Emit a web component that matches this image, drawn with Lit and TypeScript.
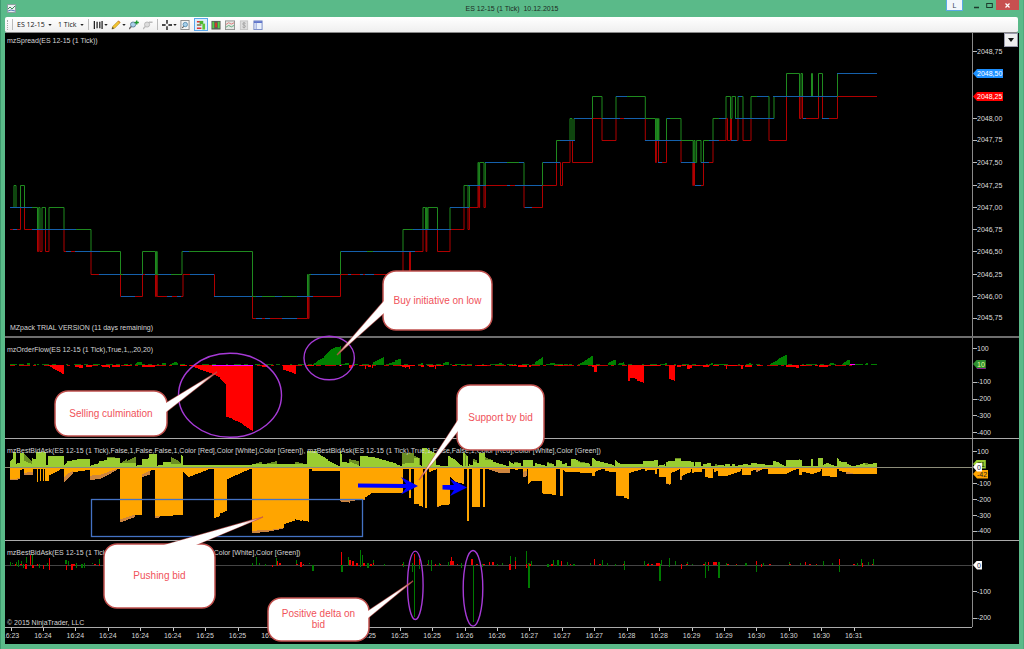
import { LitElement, html, svg, css } from "lit";
import { customElement } from "lit/decorators.js";
import { styleMap } from "lit/directives/style-map.js";

type Step = [number, number];
type Seg = [number, number, number, number];
type Block = { at: number; segs: Seg[] };
type Spike = [number, number, number, number];

// ---------- price panel: tick levels, counted down from 2048.75 ----------
const levelY = (k: number) => Math.floor(51.5 + 22.25 * k) + 0.5;

const ASK: Step[] = [
  [10, 7], [14, 6], [16, 7], [20.5, 6], [24.5, 7], [37.5, 8], [38.7, 7], [40, 8], [42, 7], [45.5, 8], [49, 7],
  [64, 8], [91, 9], [120.5, 10], [142.5, 9], [155.5, 10], [156.4, 9], [157.2, 10], [182, 9], [252.5, 11],
  [307.5, 10], [308.2, 11], [309, 10], [340.5, 9], [403, 8], [423, 7], [425.6, 8], [426.4, 7], [427.2, 8],
  [428, 7], [437.5, 8], [450, 7], [464, 6], [468, 7], [469.4, 6], [478, 5], [478.8, 6], [479.6, 5], [484, 6],
  [485.3, 5], [524, 6], [542.5, 5], [556.5, 4], [570, 3], [572, 4], [574, 3], [592.5, 2], [602, 3], [616, 2],
  [645.3, 3], [655.5, 4], [656.4, 3], [657.5, 4], [658.6, 3], [658.9, 4], [666.5, 3], [681, 4], [693.2, 5],
  [694, 4], [695, 5], [696.6, 4], [701, 5], [703.5, 4], [713, 3], [726, 2], [730.5, 3], [732, 2], [735.5, 3],
  [738, 2], [743, 3], [751, 2], [769, 3], [774, 2], [786.5, 1], [799.5, 2], [801, 1], [802.5, 2], [811.5, 1],
  [812.5, 2], [818.5, 1], [822.5, 2], [837.5, 1], [877, 1],
];
const BID: Step[] = [
  [10, 8], [20.5, 7], [24.5, 8], [37.5, 9], [38.7, 8], [40, 9], [42, 8], [45.5, 9], [49, 8], [64, 9], [91, 10],
  [120.5, 11], [142.5, 10], [155.5, 11], [156.4, 10], [157.2, 11], [183, 10], [214.5, 11], [252.5, 12],
  [307.5, 11], [308.2, 12], [309, 11], [340.5, 10], [403, 9], [409.5, 10], [410.5, 9], [423, 8], [426, 9],
  [426.8, 8], [437.5, 9], [450, 8], [464, 7], [468, 8], [469.4, 7], [478, 6], [478.8, 7], [479.6, 6], [484, 7],
  [485.3, 6], [524, 7], [542.5, 6], [556.5, 5], [560.5, 6], [562.5, 5], [570, 4], [572.5, 5], [592.5, 3],
  [602, 4], [616, 3], [645.3, 4], [655.5, 5], [656.4, 4], [658.5, 5], [666.5, 4], [681, 5], [692.8, 6],
  [693.5, 5], [694.5, 6], [703.5, 5], [713, 4], [726, 3], [727.5, 4], [730.5, 3], [731.5, 4], [738, 3],
  [743, 4], [751, 3], [769, 4], [786.5, 2], [799.5, 3], [801, 2], [802.5, 3], [818.5, 2], [822.5, 3],
  [837.5, 2], [877, 2],
];
const LAST: [number, number, number][] = [
  [10, 32, 7], [13, 17, 8], [32, 76, 8], [66, 71, 9], [75, 100, 9], [99, 120, 10], [123, 143, 10], [121, 135, 11],
  [145, 155, 10], [159, 171, 10], [167, 172, 11], [177, 181, 11], [183, 189, 9], [190, 214, 10], [214, 252, 11],
  [256, 262, 12], [265, 270, 12], [282, 297, 12], [256, 262, 11], [275, 282, 11], [297, 313, 11], [311, 340, 10],
  [348, 351, 10], [360, 363, 10], [365, 374, 10], [341, 367, 9], [373, 415, 9], [413, 451, 8], [450, 469, 7],
  [468, 486, 6], [507, 510, 6], [515, 542, 6], [485, 507, 5], [519, 524, 5], [525, 532, 7], [543, 560, 5],
  [560, 575, 4], [574, 592, 3], [602, 620, 3], [616, 627, 2], [624, 645, 3], [645, 681, 4], [658, 662, 5],
  [667, 670, 3], [681, 695, 5], [701, 709, 5], [695, 701, 6], [709, 719, 4], [719, 726, 3], [731, 737, 4],
  [735, 752, 3], [752, 774, 3], [738, 742, 2], [757, 768, 2], [773, 837, 2], [803, 806, 3], [822, 829, 3],
  [837, 877, 1],
];

const stepPath = (s: Step[]) =>
  s.map(([x, k], i) => (i === 0 ? `M${x} ${levelY(k)}` : `H${x}V${levelY(k)}`)).join("");

// ---------- histogram panels: three units to a pixel ----------
const areaPath = (blocks: Block[], base: number) =>
  blocks
    .flatMap((b) => b.segs.map(([x1, y1, x2, y2]) => `M${b.at + x1} ${base}V${y1}L${b.at + x2} ${y2}V${base}Z`))
    .join("");

const FLOW_SELL: Block[] = [
  { at: 0, segs: [
    [145, 92, 192, 118], [225, 95, 250, 101], [258, 97, 275, 96], [303, 94, 330, 98], [335, 96, 360, 96],
    [378, 94, 390, 94], [425, 95, 465, 95], [540, 93, 560, 94], [570, 93, 600, 103], [600, 103, 640, 117],
    [640, 117, 660, 128], [660, 130, 678, 148], [678, 245, 700, 252], [700, 254, 728, 266], [728, 268, 759, 289],
    [785, 95, 802, 95], [849, 104, 888, 117] ] },
  { at: 900, segs: [
    [20, 94, 42, 93], [148, 98, 156, 98], [180, 94, 190, 94], [195, 101, 199, 101], [204, 95, 212, 95],
    [215, 99, 219, 99], [300, 93, 318, 98], [318, 97, 326, 97], [326, 102, 330, 102], [330, 94, 345, 94],
    [362, 95, 372, 95], [383, 94, 402, 96], [404, 101, 408, 101], [412, 94, 425, 94], [460, 93, 466, 93],
    [530, 94, 560, 94], [635, 94, 650, 94], [655, 95, 680, 95], [688, 97, 693, 97], [775, 94, 790, 94],
    [877, 96, 881, 96], [881, 112, 891, 112], [891, 94, 897, 94] ] },
  { at: 1800, segs: [
    [84, 137, 89, 137], [89, 127, 110, 132], [110, 136, 131, 143], [131, 94, 180, 94], [207, 131, 226, 138],
    [230, 95, 242, 97], [246, 94, 258, 94], [262, 101, 276, 100], [285, 94, 300, 94], [308, 96, 328, 95],
    [340, 94, 356, 94], [377, 101, 381, 101], [385, 94, 410, 94], [424, 102, 428, 102], [435, 95, 455, 95],
    [470, 94, 482, 94], [558, 95, 580, 96], [580, 97, 596, 98], [600, 94, 618, 94], [645, 94, 655, 94],
    [656, 96, 685, 95] ] },
];
const FLOW_BUY: Block[] = [
  { at: 0, segs: [
    [30, 88, 45, 88], [58, 88, 70, 88], [82, 85, 90, 85], [110, 88, 118, 88], [280, 87, 296, 87], [372, 88, 385, 88],
    [405, 87, 412, 84], [412, 82, 426, 81], [470, 88, 478, 88], [486, 84, 498, 85], [512, 87, 524, 82],
    [524, 81, 535, 83], [545, 87, 555, 87], [765, 88, 775, 87], [895, 88, 900, 88] ] },
  { at: 900, segs: [
    [38, 88, 55, 78], [55, 76, 72, 68], [72, 65, 88, 50], [88, 47, 104, 38], [104, 38, 123, 34], [133, 86, 146, 84],
    [165, 87, 175, 87], [219, 83, 252, 66], [264, 86, 284, 80], [284, 76, 302, 71], [360, 87, 368, 84],
    [412, 87, 424, 87], [428, 85, 448, 79], [465, 87, 490, 87], [500, 87, 515, 87], [588, 86, 606, 85],
    [620, 88, 640, 88], [704, 83, 728, 66], [738, 87, 750, 86], [750, 84, 765, 83], [780, 87, 790, 86],
    [806, 88, 816, 86], [836, 87, 856, 78], [856, 76, 878, 62], [924, 84, 948, 73] ] },
  { at: 1800, segs: [
    [55, 86, 72, 82], [188, 87, 200, 84], [328, 87, 339, 84], [360, 88, 375, 87], [440, 87, 453, 84],
    [510, 87, 530, 77], [530, 75, 560, 59], [618, 88, 630, 86], [688, 86, 703, 82], [728, 85, 742, 77],
    [742, 75, 751, 73], [765, 88, 790, 87], [795, 86, 804, 85], [812, 88, 830, 88] ] },
];

const BID_SIZE: Block[] = [
  { at: 0, segs: [
    [30, 132, 60, 130], [60, 104, 72, 103], [72, 114, 98, 110], [98, 101, 110, 101], [110, 140, 115, 140],
    [119, 138, 123, 138], [128, 138, 131, 138], [135, 139, 146, 137], [146, 122, 190, 99], [191, 128, 200, 120],
    [200, 118, 218, 108], [218, 112, 270, 104], [271, 122, 300, 119], [300, 120, 356, 99], [359, 254, 405, 239],
    [405, 240, 427, 240], [427, 118, 448, 108], [448, 108, 465, 104], [466, 243, 500, 243], [500, 243, 550, 239],
    [550, 112, 566, 126], [566, 126, 640, 98], [642, 250, 660, 243], [660, 236, 681, 227], [681, 133, 754, 100],
    [756, 287, 820, 285], [820, 283, 852, 278], [852, 268, 885, 256], [885, 253, 905, 258], [905, 256, 927, 260],
    [936, 108, 1020, 108] ] },
  { at: 990, segs: [
    [30, 192, 104, 191], [104, 188, 130, 172], [130, 173, 219, 173], [219, 100, 236, 100], [237, 190, 243, 190],
    [243, 102, 251, 102], [251, 205, 268, 209], [268, 213, 279, 215], [284, 218, 292, 218], [298, 112, 318, 103],
    [321, 213, 361, 208], [361, 126, 376, 140], [376, 140, 403, 148], [410, 257, 418, 257], [427, 216, 449, 216],
    [458, 215, 466, 215], [470, 99, 530, 103], [555, 105, 570, 102], [580, 110, 592, 108], [594, 147, 608, 137],
    [608, 137, 636, 137], [636, 175, 678, 180], [690, 183, 699, 183], [699, 105, 710, 112], [710, 112, 785, 113],
    [785, 123, 796, 123], [796, 110, 815, 103], [825, 108, 857, 112], [857, 181, 882, 183] ] },
  { at: 1860, segs: [
    [11, 190, 28, 191], [28, 114, 75, 100], [75, 107, 105, 104], [105, 118, 110, 118], [118, 127, 138, 127],
    [138, 142, 146, 147], [146, 147, 152, 147], [152, 114, 178, 104], [180, 132, 184, 132], [184, 124, 214, 110],
    [217, 113, 245, 110], [254, 126, 264, 126], [264, 130, 278, 130], [282, 112, 294, 106], [295, 124, 330, 121],
    [330, 120, 364, 108], [367, 121, 392, 121], [392, 109, 408, 104], [412, 106, 440, 101], [445, 118, 502, 118],
    [502, 114, 535, 100], [537, 121, 545, 120], [545, 112, 570, 113], [570, 119, 604, 108], [606, 124, 630, 124],
    [630, 127, 651, 127], [656, 108, 700, 114], [700, 117, 770, 116] ] },
];
const BID_PRIOR: Block[] = [
  { at: 0, segs: [
    [30, 136, 60, 133], [72, 120, 98, 121], [191, 144, 218, 117], [271, 134, 300, 133], [300, 132, 350, 106],
    [359, 263, 405, 246], [427, 126, 450, 118], [466, 249, 480, 247], [756, 293, 806, 292], [806, 290, 852, 280] ] },
  { at: 990, segs: [
    [30, 199, 60, 203], [60, 198, 104, 194], [321, 216, 330, 214], [478, 104, 510, 114], [510, 115, 540, 115],
    [580, 126, 592, 124], [857, 183, 882, 184] ] },
  { at: 1860, segs: [[138, 146, 150, 149], [180, 135, 186, 134], [408, 112, 420, 108], [678, 117, 700, 117]] },
];
const ASK_SIZE: Block[] = [
  { at: 0, segs: [
    [30, 78, 40, 70], [40, 50, 47, 50], [47, 87, 60, 83], [60, 54, 73, 54], [73, 78, 95, 86], [95, 70, 109, 72],
    [109, 50, 117, 50], [118, 50, 123, 50], [124, 50, 137, 50], [137, 90, 144, 90], [145, 64, 192, 64],
    [192, 90, 200, 84], [200, 80, 230, 74], [230, 72, 271, 71], [271, 92, 296, 85], [296, 78, 340, 74],
    [322, 68, 360, 70], [360, 84, 408, 84], [408, 92, 425, 90], [425, 72, 452, 70], [446, 57, 471, 57],
    [471, 92, 490, 88], [490, 80, 512, 82], [512, 86, 544, 86], [544, 60, 550, 64], [550, 90, 756, 90],
    [756, 88, 830, 88], [830, 88, 888, 88], [888, 88, 921, 88], [921, 47, 950, 48], [950, 52, 985, 75],
    [985, 77, 1018, 93] ] },
  { at: 990, segs: [
    [30, 45, 36, 62], [36, 80, 60, 84], [60, 80, 88, 92], [90, 62, 130, 66], [130, 66, 200, 86], [200, 88, 216, 94],
    [216, 86, 252, 84], [252, 70, 268, 68], [268, 90, 276, 92], [276, 38, 290, 38], [290, 42, 318, 56],
    [318, 90, 352, 94], [354, 62, 376, 74], [376, 76, 398, 94], [400, 53, 404, 53], [408, 64, 413, 64],
    [416, 88, 428, 90], [428, 78, 446, 84], [446, 54, 464, 54], [464, 74, 490, 76], [490, 80, 530, 92],
    [538, 78, 552, 88], [552, 84, 572, 84], [578, 74, 610, 76], [614, 84, 646, 92], [650, 84, 672, 88],
    [678, 74, 696, 78], [696, 88, 712, 84], [724, 72, 744, 74], [744, 82, 780, 86], [786, 68, 796, 72],
    [796, 76, 852, 90], [856, 76, 870, 86] ] },
  { at: 1860, segs: [
    [0, 88, 70, 88], [70, 78, 115, 76], [118, 90, 136, 88], [138, 80, 164, 78], [164, 71, 184, 71], [184, 78, 222, 80],
    [226, 80, 243, 80], [248, 86, 274, 85], [278, 92, 312, 91], [315, 87, 330, 88], [335, 85, 346, 88],
    [350, 92, 368, 90], [368, 86, 392, 90], [392, 85, 410, 85], [410, 88, 458, 89], [460, 77, 476, 82],
    [476, 84, 498, 94], [498, 76, 536, 75], [536, 75, 545, 75], [546, 94, 560, 92], [572, 71, 578, 71],
    [580, 93, 592, 93], [593, 69, 608, 69], [608, 90, 622, 84], [622, 84, 648, 94], [650, 70, 658, 71],
    [658, 79, 680, 82], [680, 86, 700, 95], [704, 93, 722, 88], [722, 88, 735, 84], [735, 90, 758, 86],
    [758, 83, 770, 84] ] },
];
const ASK_PRIOR: Block[] = [
  { at: 0, segs: [
    [73, 58, 95, 80], [322, 66, 345, 66], [365, 84, 382, 70], [382, 78, 408, 64], [512, 66, 534, 76],
    [534, 78, 544, 84], [765, 86, 785, 80], [800, 86, 830, 78], [886, 80, 921, 88] ] },
  { at: 990, segs: [
    [56, 72, 86, 78], [216, 53, 252, 54], [252, 62, 270, 70], [276, 40, 316, 58], [404, 54, 414, 64],
    [428, 70, 440, 76], [464, 66, 488, 76], [552, 80, 572, 84], [650, 80, 668, 86], [744, 78, 780, 86] ] },
  { at: 1860, segs: [[164, 69, 184, 69], [284, 86, 300, 92], [536, 71, 540, 71], [735, 82, 752, 88]] },
];

const DELTA_BUY: Spike[] = [
  [32, 380, 394, 3], [38, 384, 388, 3], [50, 380, 392, 4], [56, 376, 396, 3], [64, 378, 388, 3], [70, 386, 398, 4],
  [80, 366, 384, 4], [97, 356, 390, 4], [118, 386, 398, 3], [142, 384, 392, 5], [198, 376, 388, 6], [206, 378, 390, 4],
  [228, 384, 400, 3], [246, 386, 398, 4], [254, 384, 400, 3], [276, 384, 388, 3], [299, 371, 392, 3],
  [757, 384, 392, 3], [769, 366, 390, 3], [778, 385, 389, 3], [795, 386, 394, 3], [830, 368, 390, 4],
  [889, 374, 390, 3], [928, 384, 388, 3], [939, 390, 409, 4],
  [1026, 390, 410, 4], [1046, 366, 394, 3], [1081, 346, 396, 4], [1088, 360, 390, 3], [1104, 384, 398, 4],
  [1120, 376, 392, 3], [1152, 388, 392, 3], [1211, 380, 396, 3], [1236, 384, 410, 3], [1244, 390, 546, 4],
  [1258, 384, 402, 4], [1285, 376, 390, 3], [1294, 376, 408, 4], [1318, 384, 394, 3], [1345, 380, 392, 3],
  [1384, 384, 400, 3], [1420, 390, 562, 4], [1448, 386, 396, 3], [1492, 386, 394, 3], [1508, 384, 391, 3],
  [1530, 362, 390, 3], [1547, 366, 400, 3], [1580, 348, 390, 4], [1587, 384, 459, 4], [1594, 378, 392, 3],
  [1644, 386, 397, 6], [1660, 376, 392, 3], [1674, 376, 394, 4], [1702, 382, 394, 3], [1722, 386, 392, 4],
  [1770, 384, 390, 3], [1807, 374, 394, 3], [1822, 384, 392, 3], [1846, 386, 392, 3],
  [1874, 378, 404, 3], [1932, 377, 392, 3], [1946, 384, 392, 3], [1968, 384, 392, 3], [1980, 388, 437, 4],
  [1983, 376, 390, 3], [2008, 370, 396, 3], [2026, 378, 390, 3], [2062, 380, 392, 3], [2076, 386, 390, 3],
  [2116, 382, 429, 4], [2125, 390, 408, 4], [2157, 382, 429, 4], [2180, 385, 392, 3], [2208, 386, 392, 3],
  [2238, 384, 392, 6], [2269, 386, 410, 4], [2290, 384, 392, 4], [2368, 380, 392, 3], [2400, 384, 391, 3],
  [2448, 388, 394, 3], [2470, 378, 392, 3], [2498, 385, 391, 3], [2518, 384, 410, 4], [2572, 384, 392, 3],
  [2584, 372, 394, 3], [2606, 380, 390, 3], [2621, 372, 390, 3],
];
const DELTA_SELL: Spike[] = [
  [46, 387, 392, 4], [64, 387, 391, 6], [78, 386, 403, 4], [92, 360, 390, 4], [98, 390, 400, 6], [112, 387, 394, 4],
  [130, 390, 401, 3], [148, 370, 404, 3], [200, 390, 406, 4], [216, 386, 404, 4], [222, 386, 394, 4],
  [285, 387, 391, 4], [298, 386, 392, 5], [818, 390, 396, 4], [832, 378, 392, 5], [840, 384, 390, 5],
  [890, 388, 391, 5], [903, 380, 396, 5], [910, 386, 391, 3],
  [1025, 352, 390, 4], [1050, 376, 390, 4], [1059, 378, 394, 5], [1070, 384, 392, 5], [1092, 384, 392, 4],
  [1112, 386, 392, 6], [1120, 384, 391, 3], [1208, 387, 391, 4], [1228, 384, 390, 4], [1244, 356, 390, 4],
  [1258, 372, 390, 4], [1282, 386, 390, 4], [1306, 386, 392, 4], [1322, 386, 390, 4], [1354, 366, 390, 4],
  [1356, 378, 390, 12], [1372, 386, 391, 5], [1417, 372, 390, 6], [1430, 386, 390, 6], [1452, 386, 391, 4],
  [1468, 382, 391, 5], [1478, 382, 391, 7], [1530, 388, 404, 4], [1547, 378, 402, 4], [1580, 386, 400, 3],
  [1590, 386, 394, 4], [1656, 387, 393, 4], [1685, 378, 392, 4], [1712, 386, 391, 4], [1783, 372, 390, 3],
  [1800, 387, 391, 6], [1870, 386, 390, 5], [1944, 387, 393, 5], [1956, 386, 391, 4], [1974, 384, 394, 10],
  [2045, 388, 401, 3], [2060, 386, 391, 5], [2112, 386, 391, 4], [2125, 381, 390, 5], [2145, 381, 390, 10],
  [2184, 386, 391, 5], [2210, 386, 391, 4], [2269, 379, 390, 3], [2284, 388, 396, 3], [2310, 387, 391, 8],
  [2370, 387, 390, 4], [2416, 380, 391, 3], [2430, 386, 391, 6], [2450, 386, 391, 4], [2518, 372, 390, 3],
  [2562, 387, 391, 4], [2586, 384, 395, 3], [2618, 386, 390, 4],
];
const spikePath = (s: Spike[]) =>
  s.map(([x, y1, y2, w]) => `M${x - w / 2} ${y1}h${w}V${y2}h${-w}Z`).join("");

// ---------- scales ----------
const PRICES = ["2048,75", "", "", "2048,00", "2047,75", "2047,50", "2047,25", "2047,00", "2046,75", "2046,50", "2046,25", "2046,00", "2045,75"];
const MINUTES = [23, 24, 24, 24, 24, 24, 25, 25, 25, 25, 25, 25, 25, 25, 26, 26, 27, 27, 27, 28, 28, 29, 29, 30, 30, 30, 31];

type Mark = { at: number; text: string; tag?: string };
const priceMarks: Mark[] = [
  ...PRICES.map((text, k) => ({ at: (levelY(k) - 33) / 303, text })).filter((m) => m.text),
  { at: (levelY(1) - 33) / 303, text: "2048,50", tag: "last" },
  { at: (levelY(2) - 33) / 303, text: "2048,25", tag: "low" },
];
const flowMarks: Mark[] = [
  ...[100, -100, -200, -300, -400].map((v) => ({ at: (27.5 - v * 0.168) / 100, text: String(v) })),
  { at: 26 / 100, text: "10", tag: "flow" },
];
const sizeMarks: Mark[] = [
  ...[100, -100, -200, -300, -400].map((v) => ({ at: (28.8 - v * 0.159) / 101, text: String(v) })),
  { at: 25 / 101, text: "71", tag: "ask" },
  { at: 35 / 101, text: "-42", tag: "bid" },
  { at: 28 / 101, text: "0", tag: "zero" },
];
const deltaMarks: Mark[] = [
  ...[-100, -200].map((v) => ({ at: (24 - v * 0.267) / 86, text: String(v) })),
  { at: 24 / 86, text: "0", tag: "zero" },
];

// ---------- notes laid over the chart ----------
type Note = { x: number; y: number; w: number; h: number; tail: string; tip: [number, number]; text: string };
const NOTES: Note[] = [
  { x: 383, y: 271, w: 109, h: 59, tail: "384,301 337,355 384,313", tip: [337, 355], text: "Buy initiative on low" },
  { x: 55, y: 391, w: 112, h: 45, tail: "166,403 217,372 166,412", tip: [217, 372], text: "Selling culmination" },
  { x: 457, y: 385, w: 87, h: 65, tail: "458,420 419,480 458,431", tip: [419, 480], text: "Support by bid" },
  { x: 104, y: 544, w: 111, h: 64, tail: "164,545 263,517 196,545", tip: [263, 517], text: "Pushing bid" },
  { x: 268, y: 598, w: 101, h: 43, tail: "368,611 413,581 368,618", tip: [413, 581], text: "Positive delta on bid" },
];

const pct = (v: number, of: number) => `${(v / of) * 100}%`;

const caret = html`<svg class="caret" viewBox="0 0 5 3"><path d="M0 0H5L2.500 3Z" fill="#222" /></svg>`;

const ICONS = {
  bars: svg`<path d="M1.500 1V10M4.500 2V9M7.500 2V9M10 1V10" stroke="#222" stroke-width="1.400" fill="none"/>`,
  pencil: svg`<path d="M1 10L2 7L8 1L10 3L4 9Z" fill="#f3c52e" stroke="#a5801c" stroke-width=".6"/><path d="M1 10L1.800 7.700L3.300 9.200Z" fill="#333"/><path d="M7.600 1.400L9.600 3.400L10.400 2.500L8.500 .5Z" fill="#d9822b"/>`,
  zoomIn: svg`<circle cx="4.500" cy="5" r="2.800" fill="#a9d0ea" stroke="#5b7f97"/><path d="M2.500 7.200L0 10" stroke="#666" stroke-width="1.600"/><path d="M8.500 .5V5M6.200 2.700H10.800" stroke="#1c9a2e" stroke-width="1.500"/>`,
  zoomOut: svg`<circle cx="4.500" cy="5" r="2.800" fill="#dcdcdc" stroke="#b5b5b5"/><path d="M2.500 7.200L0 10M6.500 2.500H10.500" stroke="#bbb" stroke-width="1.500"/>`,
  cross: svg`<path d="M5.500 0V4M5.500 7V11M0 5.500H4M7 5.500H11" stroke="#111" stroke-width="1.500"/>`,
  page: svg`<rect x="1" y=".5" width="9" height="10" fill="#f5f5f5" stroke="#888"/><circle cx="5.800" cy="5" r="2.400" fill="#a9d0ea" stroke="#5b8fb3"/><path d="M4 7L2.500 8.800" stroke="#555" stroke-width="1.200"/>`,
  trader: svg`<path d="M1 2H5M1 9H6" stroke="#d33" stroke-width="1.600"/><path d="M1 5.500H6" stroke="#7b6a3c" stroke-width="1.600"/><path d="M4 1H8V4.500H4Z" fill="#4db52f"/><path d="M7 4H10V10.500H7Z" fill="#5cc538"/>`,
  candles: svg`<rect x=".5" y="1" width="10" height="9.500" fill="#5a5f57"/><path d="M2.500 2V9M8.500 2V9" stroke="#54d045" stroke-width="2"/><path d="M5.500 3V8" stroke="#d93a2b" stroke-width="2"/>`,
  indicator: svg`<rect x=".5" y="1" width="10" height="9.500" fill="#e4e6e3" stroke="#8e918e"/><path d="M1 5L4 3L7 4.500L10 3" stroke="#d77" fill="none"/><path d="M1 8L4 6L7 7.500L10 6" stroke="#5aa878" fill="none"/>`,
  strategy: svg`<rect x="1.500" y="1" width="8" height="9.500" fill="#ddd" stroke="#c4c4c4"/><path d="M7.300 3.800C6 2.600 3.900 3.200 4 4.500C4.200 6 7.200 5.300 7.200 7C7.200 8.500 4.700 8.600 3.700 7.500M5.500 2.300V9.300" stroke="#999" stroke-width=".8" fill="none"/>`,
  props: svg`<rect x="1" y="1" width="9" height="9.500" fill="#e9f0fb" stroke="#7386c4"/><path d="M1 2.300H10" stroke="#5f74ca" stroke-width="2"/><path d="M3.500 3V10" stroke="#8798d6"/>`,
};

const SANS = css`"Liberation Sans", Arial, sans-serif`;

@customElement("value-scale")
class ValueScale extends LitElement {
  static properties = { marks: { attribute: false } };
  declare marks: Mark[];

  static styles = css`
    :host { display: block; position: relative; box-sizing: border-box; border-left: 1px solid #8a8a8a; }
    .mark { position: absolute; left: 0; display: flex; align-items: center; height: 10px; margin-top: -5px; font: 7px/10px ${SANS}; color: #ddd; white-space: nowrap; }
    .tick { width: 4px; height: 1px; background: #bbb; }
    .tag { height: 9px; box-sizing: border-box; padding: 0 1px 0 4px; line-height: 9px; color: #fff; clip-path: polygon(0 50%, 4px 0, 100% 0, 100% 100%, 4px 100%); }
    .last { background: #1e90ff; }
    .low { background: #f00; }
    .flow { background: #2f8f2f; color: #e8ff9a; box-shadow: inset 0 -1px #f0f; }
    .ask { background: #9acd32; color: #222; padding-right: 1px; }
    .bid { background: #ffa500; color: #222; padding-right: 1px; }
    .zero { background: #fff; color: #124; }
  `;

  render() {
    return (this.marks ?? []).map((m) => html`
      <div class="mark" style=${styleMap({ top: `${m.at * 100}%` })}>
        ${m.tag ? html`<span class="tag ${m.tag}">${m.text}</span>` : html`<span class="tick"></span><span>${m.text}</span>`}
      </div>`);
  }
}

@customElement("app-root")
class AppRoot extends LitElement {
  static styles = css`
    :host { display: block; height: 100vh; font: 7px/9px ${SANS}; }
    * { box-sizing: border-box; }
    .window { height: 100%; display: grid; grid-template-rows: 17px 16px minmax(0, 1fr); padding: 0 4px 5px; background: #5aba89; border-left: 1px solid #3f9a6f; border-right: 1px solid #4ea97c; }
    button, select { font: inherit; color: inherit; border: 0; padding: 0; margin: 0; background: none; appearance: none; display: block; }
    svg { display: block; }

    .titlebar { display: grid; grid-template-columns: 1fr auto 1fr; align-items: center; color: #1c2a23; }
    .logo { width: 9px; height: 9px; margin-left: 2px; }
    .title { margin: 0; font: 7px/9px ${SANS}; white-space: pre; }
    .controls { align-self: start; justify-self: end; display: flex; align-items: stretch; height: 11px; }
    .lang { width: 17px; background: #f3f6fb; border: 1px solid #5aa9e6; border-top: 0; color: #345; margin-right: 7px; }
    .win { width: 13px; display: grid; place-items: center; }
    .win svg { width: 7px; height: 7px; }
    .close { width: 23px; background: #c75050; height: 10px; }

    .toolbar { display: flex; align-items: center; border-radius: 2px; background: linear-gradient(#fff, #efefef); border-bottom: 1px solid #888; font-family: "Open Sans", "Noto Sans", sans-serif; color: #111; padding-left: 2px; margin-right: 1px; }
    .grip { width: 1px; height: 10px; border-left: 1px dotted #aaa; margin-right: 4px; }
    .sep { width: 1px; height: 11px; background: #bbb; margin-right: 4px; }
    .pick { display: flex; align-items: center; gap: 3px; margin-right: 6px; }
    .pick.last { margin-right: 4px; }
    .caret { width: 4px; height: 2px; flex: none; }
    .tool { display: flex; align-items: center; gap: 1px; margin-right: 4px; height: 13px; }
    .tool.drop { margin-right: 3px; }
    .tool svg.icon { width: 10px; height: 10px; flex: none; }
    .tool.on { border: 1px solid #59a7ec; background: #dceefb; padding: 0 1px; margin-right: 3px; }

    .chart { position: relative; display: grid; grid-template-rows: 305fr 101fr 102fr 86fr 17px; min-height: 0; background: #000; color: #d6d6d6; overflow: hidden; }
    .panel { position: relative; display: grid; grid-template-columns: minmax(0, 1fr) 47px; min-height: 0; border-bottom: 1px solid #aaa; }
    .panel.main { border-bottom: 2px solid #6e6e6e; }
    .panel.bottom { border-bottom: 0; }
    .plot { width: 100%; height: 100%; min-height: 0; }
    .caption { position: absolute; top: 7px; left: 2px; white-space: nowrap; }
    .main .caption { top: 3px; }
    .foot { position: absolute; bottom: 4px; left: 5px; }
    .copy { position: absolute; bottom: 0; left: 2px; }
    .fill { shape-rendering: crispEdges; }
    .times { position: relative; border-top: 1px solid #aaa; margin-right: 47px; }
    .time { position: absolute; top: 0; width: 24px; margin-left: -12px; text-align: center; padding-top: 3px; }
    .time::before { content: ""; position: absolute; left: 12px; top: 0; width: 1px; height: 3px; background: #ccc; }
    .menu { position: absolute; top: 0; right: 1px; width: 14px; height: 14px; background: #eee; border: 1px solid #99a; display: grid; place-items: center; }
    .menu svg { width: 6px; height: 4px; }
    .overlay { position: absolute; inset: 0; width: 100%; height: 100%; pointer-events: none; }
    .note { position: absolute; display: grid; place-items: center; text-align: center; padding: 0 10px 1px; font-size: 10px; line-height: 11px; color: #f0525a; }
  `;

  private tool(label: string, icon: unknown, drop = false, on = false) {
    return html`<button class="tool ${drop ? "drop" : ""} ${on ? "on" : ""}" aria-label=${label}>
      <svg class="icon" viewBox="0 0 11 11">${icon}</svg>${drop ? caret : ""}
    </button>`;
  }

  render() {
    const args = "1,Color [Red],Color [White],Color [Green])";
    return html`
      <div class="window">
        <header class="titlebar">
          <svg class="logo" viewBox="0 0 9 9"><rect x=".5" y=".5" width="8" height="8" fill="#e9eef0" stroke="#8da0a0"/><path d="M1 5L3 3L5 5L8 2" stroke="#3c8f5a" fill="none"/><path d="M1 7L4 6L8 7" stroke="#5579b8" fill="none"/></svg>
          <h1 class="title">ES 12-15 (1 Tick)  10.12.2015</h1>
          <div class="controls">
            <button class="lang">L</button>
            <button class="win" aria-label="Minimize"><svg viewBox="0 0 7 7"><path d="M1 5.500H6" stroke="#1d3a2c" stroke-width="1.500"/></svg></button>
            <button class="win" aria-label="Maximize"><svg viewBox="0 0 7 7"><rect x=".7" y="1.500" width="5.600" height="4" fill="none" stroke="#1d3a2c"/></svg></button>
            <button class="win close" aria-label="Close"><svg viewBox="0 0 7 7"><path d="M1.500 1.500L5.500 5.500M5.500 1.500L1.500 5.500" stroke="#fff" stroke-width="1.200"/></svg></button>
          </div>
        </header>

        <nav class="toolbar">
          <span class="grip"></span><span class="sep"></span>
          <label class="pick"><select aria-label="Instrument"><option>ES 12-15</option></select>${caret}</label>
          <label class="pick last"><select aria-label="Interval"><option>1 Tick</option></select>${caret}</label>
          <span class="sep"></span>
          ${this.tool("Chart style", ICONS.bars, true)}
          ${this.tool("Drawing tools", ICONS.pencil, true)}
          ${this.tool("Zoom in", ICONS.zoomIn)}
          ${this.tool("Zoom out", ICONS.zoomOut)}
          <span class="sep"></span>
          ${this.tool("Cursor", ICONS.cross, true)}
          ${this.tool("Data box", ICONS.page)}
          ${this.tool("Chart trader", ICONS.trader, false, true)}
          ${this.tool("Data series", ICONS.candles)}
          ${this.tool("Indicators", ICONS.indicator)}
          ${this.tool("Strategies", ICONS.strategy)}
          ${this.tool("Properties", ICONS.props)}
        </nav>

        <main class="chart">
          <section class="panel main">
            <svg class="plot" viewBox="5 33 967 303" preserveAspectRatio="none">
              <path d=${stepPath(BID)} fill="none" stroke="#b00000" />
              <path d=${stepPath(ASK)} fill="none" stroke="#1f8a1f" />
              ${LAST.map(([a, b, k]) => svg`<path d="M${a} ${levelY(k)}H${b}" stroke="#1560ac" />`)}
            </svg>
            <span class="caption">mzSpread(ES 12-15 (1 Tick))</span>
            <span class="foot">MZpack TRIAL VERSION (11 days remaining)</span>
            <value-scale .marks=${priceMarks}></value-scale>
          </section>

          <section class="panel">
            <svg class="plot fill" viewBox="15 9 2901 300" preserveAspectRatio="none">
              <path d="M30 89.500H2630" stroke="#0a6a0a" stroke-width="3" stroke-dasharray="21 9 12 30 6 18" />
              <path d="M30 92.500H2560" stroke="#c00000" stroke-width="3" stroke-dasharray="15 12 33 9 9 24" />
              <path d=${areaPath(FLOW_SELL, 90)} fill="#f00" />
              <path d=${areaPath(FLOW_BUY, 90)} fill="#008000" />
              <path d="M636 92H759M2551 87.500H2565M1020 91H1024" stroke="#f0f" stroke-width="4" />
            </svg>
            <span class="caption">mzOrderFlow(ES 12-15 (1 Tick),True,1,,,20,20)</span>
            <value-scale .marks=${flowMarks}></value-scale>
          </section>

          <section class="panel">
            <svg class="plot fill" viewBox="15 12 2901 303" preserveAspectRatio="none">
              <path d=${areaPath(ASK_PRIOR, 97)} fill="#6b8e23" />
              <path d=${areaPath(ASK_SIZE, 97)} fill="#9acd32" />
              <path d=${areaPath(BID_PRIOR, 97)} fill="#cd853f" />
              <path d=${areaPath(BID_SIZE, 97)} fill="#ffa500" />
              <path d="M30 94.500H2630" stroke="#9acd32" stroke-width="3" />
              <path d="M30 100H2630" stroke="#ffa500" stroke-width="3" />
              <path d="M15 97.500H2916" stroke="#8d8d7a" stroke-width="3" />
            </svg>
            <span class="caption">mzBestBidAsk(ES 12-15 (1 Tick),False,1,False,False,${args}, mzBestBidAsk(ES 12-15 (1 Tick),True,1,False,False,${args}</span>
            <value-scale .marks=${sizeMarks}></value-scale>
          </section>

          <section class="panel bottom">
            <svg class="plot fill" viewBox="15 318 2901 258" preserveAspectRatio="none">
              <path d="M15 390H2916" stroke="#444" stroke-width="3" />
              <path d=${spikePath(DELTA_BUY)} fill="#007a00" />
              <path d=${spikePath(DELTA_SELL)} fill="#f00000" />
            </svg>
            <span class="caption">mzBestBidAsk(ES 12-15 (1 Tick),True,1,False,False,${args}</span>
            <span class="copy">© 2015 NinjaTrader, LLC</span>
            <value-scale .marks=${deltaMarks}></value-scale>
          </section>

          <div class="times">
            ${MINUTES.map((m, i) => html`<span class="time" style=${styleMap({ left: pct(5.5 + i * 32.43, 967) })}>16:${m}</span>`)}
          </div>

          <svg class="overlay" viewBox="5 33 1014 611" preserveAspectRatio="none">
            <defs>
              ${NOTES.map((n, i) => svg`<radialGradient id="tip${i}" gradientUnits="userSpaceOnUse" cx=${n.tip[0]} cy=${n.tip[1]} r="22">
                <stop offset="0" stop-color="#c0504d" stop-opacity=".7"/><stop offset=".5" stop-color="#e9b4b0"/><stop offset="1" stop-color="#fff"/>
              </radialGradient>`)}
            </defs>
            <rect x="91.500" y="499.500" width="271" height="37" fill="none" stroke="#4472c4" stroke-width="1.300" />
            <path d="M358 483.500L406 484L401 477L418 486L401 494.500L406 488L358 487.500Z" fill="#0000ff" />
            <path d="M442.500 485L454 485L450 479L467 487.500L450 496L454 490L442.500 489.500Z" fill="#0000ff" />
            <g fill="none" stroke="#a63ad6" stroke-width="1.400">
              <ellipse cx="230" cy="395.300" rx="51.500" ry="42" />
              <ellipse cx="329.200" cy="358" rx="25.200" ry="21.800" />
              <ellipse cx="415.300" cy="585.300" rx="7.800" ry="34.200" />
              <ellipse cx="473" cy="588.300" rx="9.800" ry="37.800" />
            </g>
            ${NOTES.map((n, i) => svg`
              <polygon points=${n.tail} fill="none" stroke="#c0504d" stroke-width="1.200" stroke-opacity=".8" />
              <rect x=${n.x} y=${n.y} width=${n.w} height=${n.h} rx="13" fill="#fff" stroke="#c0504d" stroke-width="1.500" />
              <polygon points=${n.tail} fill="url(#tip${i})" />`)}
          </svg>
          ${NOTES.map((n) => html`<div class="note" style=${styleMap({
            left: pct(n.x - 5, 1014), top: pct(n.y - 33, 611), width: pct(n.w, 1014), height: pct(n.h, 611),
          })}>${n.text}</div>`)}
          <button class="menu" aria-label="Chart menu"><svg viewBox="0 0 6 4"><path d="M0 0H6L3 4Z" fill="#111"/></svg></button>
        </main>
      </div>`;
  }
}
